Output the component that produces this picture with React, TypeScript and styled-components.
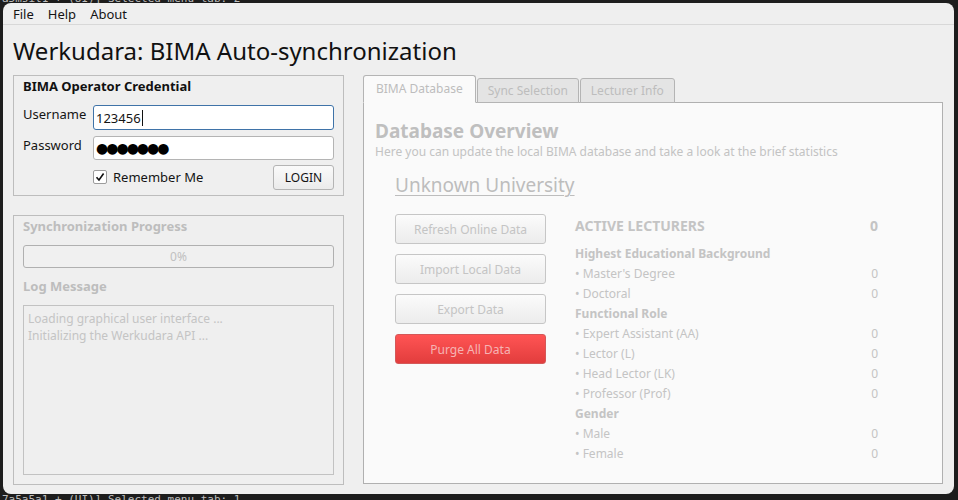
import { Fragment } from "react";
import styled, { createGlobalStyle } from "styled-components";

const GlobalStyle = createGlobalStyle`
  html, body {
    margin: 0;
    padding: 0;
    background: #1d1d1d;
  }
  * {
    box-sizing: border-box;
  }
`;

const Desktop = styled.div`
  position: relative;
  width: 958px;
  height: 500px;
  overflow: hidden;
  background: #1d1d1d;
  padding: 3px 4px 6px 3px;
  display: flex;
`;

// terminal output peeking out behind the window
const TermLine = styled.div<{ $top: number }>`
  position: absolute;
  left: 2px;
  top: ${(p) => p.$top}px;
  font-family: "DejaVu Sans Mono", monospace;
  font-size: 11px;
  line-height: 13px;
  white-space: pre;
  color: #bdbdbd;
`;

const Window = styled.div`
  position: relative;
  z-index: 1;
  flex: 1;
  display: flex;
  flex-direction: column;
  background: #efefef;
  border-radius: 8px;
  overflow: hidden;
  font-family: "Noto Sans", "Open Sans", sans-serif;
  color: #141414;
`;

const MenuBar = styled.div`
  display: flex;
  height: 22px;
  align-items: center;
  padding-left: 3px;
  border-bottom: 1px solid #d8d8d8;
  font-size: 13px;
`;

const MenuItem = styled.span`
  padding: 0 7px;
`;

const Title = styled.h1`
  margin: 0;
  padding: 9px 10px 0;
  height: 49px;
  font-weight: 400;
  font-size: 24px;
  line-height: 34px;
  color: #111;
`;

const Main = styled.div`
  flex: 1;
  display: flex;
  gap: 19px;
  padding: 1px 11px 10px 10px;
`;

const LeftColumn = styled.div`
  width: 331px;
  display: flex;
  flex-direction: column;
  gap: 19px;
  margin-bottom: -1px;
`;

const GroupBox = styled.section<{ $grow?: boolean }>`
  border: 1px solid #bdbdbd;
  padding: 1px 9px ${(p) => (p.$grow ? 9 : 5)}px;
  display: flex;
  flex-direction: column;
  ${(p) => (p.$grow ? "flex: 1;" : "")}
`;

const GroupTitle = styled.div<{ $dim?: boolean; $top?: number }>`
  font-size: 13px;
  font-weight: 700;
  line-height: 18px;
  margin-top: ${(p) => p.$top ?? 0}px;
  color: ${(p) => (p.$dim ? "#bdbdbd" : "#111")};
`;

const FieldRow = styled.div<{ $top: number }>`
  display: flex;
  align-items: flex-start;
  margin-top: ${(p) => p.$top}px;
`;

const FieldLabel = styled.label`
  width: 70px;
  font-size: 13px;
  line-height: 18px;
`;

const TextInput = styled.div<{ $focused?: boolean; $h: number }>`
  flex: 1;
  height: ${(p) => p.$h}px;
  background: #fff;
  border: 1px solid ${(p) => (p.$focused ? "#3f73a8" : "#b4b4b4")};
  border-radius: 3px;
  padding: 0 2px;
  display: flex;
  align-items: center;
  font-size: 13px;
  overflow: hidden;
`;

const Caret = styled.span`
  display: inline-block;
  width: 1px;
  height: 16px;
  background: #111;
  margin-left: 1px;
`;

const Dots = styled.span`
  font-family: "DejaVu Sans", sans-serif;
  font-size: 14px;
  letter-spacing: -2px;
  line-height: 1;
  color: #000;
`;

const ActionRow = styled.div`
  display: flex;
  align-items: center;
  margin-top: 5px;
  padding-left: 70px;
`;

const CheckLabel = styled.label`
  display: flex;
  align-items: center;
  gap: 6px;
  font-size: 13px;
  flex: 1;
  margin-top: -2px;
`;

const CheckBox = styled.span`
  width: 14px;
  height: 14px;
  background: #fff;
  border: 1px solid #9c9c9c;
  border-radius: 2px;
  display: flex;
  align-items: center;
  justify-content: center;
`;

const LoginButton = styled.button`
  width: 61px;
  height: 25px;
  border: 1px solid #b4b4b4;
  border-radius: 3px;
  background: linear-gradient(#fafafa, #ebebeb);
  font-family: inherit;
  font-size: 12px;
  color: #141414;
  padding: 0;
`;

const ProgressBar = styled.div`
  margin-top: 10px;
  height: 23px;
  border: 1px solid #b0b0b0;
  border-radius: 3px;
  background: #f0f0f0;
  display: flex;
  align-items: center;
  justify-content: center;
  font-size: 12px;
  color: #c0c0c0;
`;

const LogBox = styled.div`
  flex: 1;
  margin-top: 10px;
  border: 1px solid #c2c2c2;
  padding: 4px 4px;
  font-size: 12px;
  line-height: 17px;
  color: #c4c4c4;
`;

const RightColumn = styled.div`
  flex: 1;
  display: flex;
  flex-direction: column;
`;

const TabBar = styled.div`
  display: flex;
  align-items: flex-end;
  height: 28px;
  margin-bottom: -1px;
  position: relative;
  z-index: 1;
`;

const Tab = styled.div<{ $active?: boolean }>`
  height: ${(p) => (p.$active ? 28 : 25)}px;
  padding: 0 ${(p) => (p.$active ? 12 : 10)}px;
  margin-right: 1px;
  display: flex;
  align-items: center;
  font-size: 12px;
  color: #bdbdbd;
  border: 1px solid #b4b4b4;
  border-bottom: ${(p) => (p.$active ? "1px solid #fafafa" : "1px solid #b4b4b4")};
  border-radius: 3px 3px 0 0;
  background: ${(p) => (p.$active ? "#fafafa" : "#e4e4e4")};
  ${(p) => (p.$active ? "padding-bottom: 2px;" : "")}
`;

const TabPane = styled.div`
  flex: 1;
  background: #fafafa;
  border: 1px solid #b0b0b0;
  padding: 16px 11px 15px;
  color: #c3c3c3;
`;

const PaneHeading = styled.h2`
  margin: 0;
  font-size: 19px;
  font-weight: 700;
  line-height: 24px;
  color: #bfbfbf;
`;

const PaneSub = styled.p`
  margin: 0;
  font-size: 12px;
  line-height: 18px;
`;

const University = styled.div`
  margin: 11px 0 0 20px;
  font-size: 19px;
  line-height: 26px;
  text-decoration: underline;
  text-decoration-thickness: 1px;
  text-underline-offset: 3px;
  color: #bdbdbd;
`;

const Body = styled.div`
  display: flex;
  gap: 29px;
  margin: 16px 0 0 20px;
`;

const ButtonStack = styled.div`
  width: 151px;
  display: flex;
  flex-direction: column;
  gap: 10px;
`;

const ActionButton = styled.button<{ $danger?: boolean }>`
  height: 30px;
  border-radius: 3px;
  font-family: inherit;
  font-size: 12px;
  padding: 0;
  border: 1px solid ${(p) => (p.$danger ? "#d45858" : "#c6c6c6")};
  background: ${(p) =>
    p.$danger ? "linear-gradient(#ff5454, #e23d3d)" : "linear-gradient(#fbfbfb, #ececec)"};
  color: ${(p) => (p.$danger ? "#f6b4b4" : "#c4c4c4")};
`;

const Stats = styled.div`
  width: 305px;
  display: grid;
  grid-template-columns: 1fr auto;
  grid-template-rows: 29px;
  grid-auto-rows: 20px;
  align-items: center;
  font-size: 12px;
  color: #c4c4c4;
`;

const StatLabel = styled.div<{ $kind: "head" | "group" | "item" }>`
  font-weight: ${(p) => (p.$kind === "item" ? 400 : 700)};
  font-size: ${(p) => (p.$kind === "head" ? 14 : 12)}px;
  ${(p) => (p.$kind === "head" ? "align-self: start; padding-top: 2px; line-height: 19px;" : "")}
`;

const StatValue = styled.div<{ $head?: boolean }>`
  text-align: right;
  padding-right: 2px;
  font-weight: ${(p) => (p.$head ? 700 : 400)};
  font-size: ${(p) => (p.$head ? 14 : 12)}px;
  ${(p) => (p.$head ? "align-self: start; padding-top: 2px; line-height: 19px;" : "")}
`;

type Stat = { label: string; kind: "head" | "group" | "item"; value?: string };

const stats: Stat[] = [
  { label: "ACTIVE LECTURERS", kind: "head", value: "0" },
  { label: "Highest Educational Background", kind: "group" },
  { label: "• Master's Degree", kind: "item", value: "0" },
  { label: "• Doctoral", kind: "item", value: "0" },
  { label: "Functional Role", kind: "group" },
  { label: "• Expert Assistant (AA)", kind: "item", value: "0" },
  { label: "• Lector (L)", kind: "item", value: "0" },
  { label: "• Head Lector (LK)", kind: "item", value: "0" },
  { label: "• Professor (Prof)", kind: "item", value: "0" },
  { label: "Gender", kind: "group" },
  { label: "• Male", kind: "item", value: "0" },
  { label: "• Female", kind: "item", value: "0" },
];

export default function App() {
  return (
    <>
      <GlobalStyle />
      <Desktop>
        <TermLine $top={-8}>a5msil1 + (UI)] Selected menu tab: 2</TermLine>
        <TermLine $top={493}>7a5a5a1 + (UI)] Selected menu tab: 1</TermLine>
        <Window>
          <MenuBar>
            <MenuItem>File</MenuItem>
            <MenuItem>Help</MenuItem>
            <MenuItem>About</MenuItem>
          </MenuBar>
          <Title>Werkudara: BIMA Auto-synchronization</Title>
          <Main>
            <LeftColumn>
              <GroupBox>
                <GroupTitle>BIMA Operator Credential</GroupTitle>
                <FieldRow $top={10}>
                  <FieldLabel>Username</FieldLabel>
                  <TextInput $focused $h={25}>
                    123456
                    <Caret />
                  </TextInput>
                </FieldRow>
                <FieldRow $top={6}>
                  <FieldLabel>Password</FieldLabel>
                  <TextInput $h={24}>
                    <Dots>●●●●●●●</Dots>
                  </TextInput>
                </FieldRow>
                <ActionRow>
                  <CheckLabel>
                    <CheckBox>
                      <svg width="10" height="10" viewBox="0 0 10 10">
                        <path d="M1.5 5.2 L4 8 L8.6 1.5" fill="none" stroke="#111" strokeWidth="1.6" />
                      </svg>
                    </CheckBox>
                    Remember Me
                  </CheckLabel>
                  <LoginButton>LOGIN</LoginButton>
                </ActionRow>
              </GroupBox>
              <GroupBox $grow>
                <GroupTitle $dim>Synchronization Progress</GroupTitle>
                <ProgressBar>0%</ProgressBar>
                <GroupTitle $dim $top={9}>
                  Log Message
                </GroupTitle>
                <LogBox>
                  Loading graphical user interface ...
                  <br />
                  Initializing the Werkudara API ...
                </LogBox>
              </GroupBox>
            </LeftColumn>
            <RightColumn>
              <TabBar>
                <Tab $active>BIMA Database</Tab>
                <Tab>Sync Selection</Tab>
                <Tab>Lecturer Info</Tab>
              </TabBar>
              <TabPane>
                <PaneHeading>Database Overview</PaneHeading>
                <PaneSub>
                  Here you can update the local BIMA database and take a look at the brief statistics
                </PaneSub>
                <University>Unknown University</University>
                <Body>
                  <ButtonStack>
                    <ActionButton>Refresh Online Data</ActionButton>
                    <ActionButton>Import Local Data</ActionButton>
                    <ActionButton>Export Data</ActionButton>
                    <ActionButton $danger>Purge All Data</ActionButton>
                  </ButtonStack>
                  <Stats>
                    {stats.map((s) => (
                      <Fragment key={s.label}>
                        <StatLabel $kind={s.kind}>{s.label}</StatLabel>
                        <StatValue $head={s.kind === "head"}>{s.value ?? ""}</StatValue>
                      </Fragment>
                    ))}
                  </Stats>
                </Body>
              </TabPane>
            </RightColumn>
          </Main>
        </Window>
      </Desktop>
    </>
  );
}
